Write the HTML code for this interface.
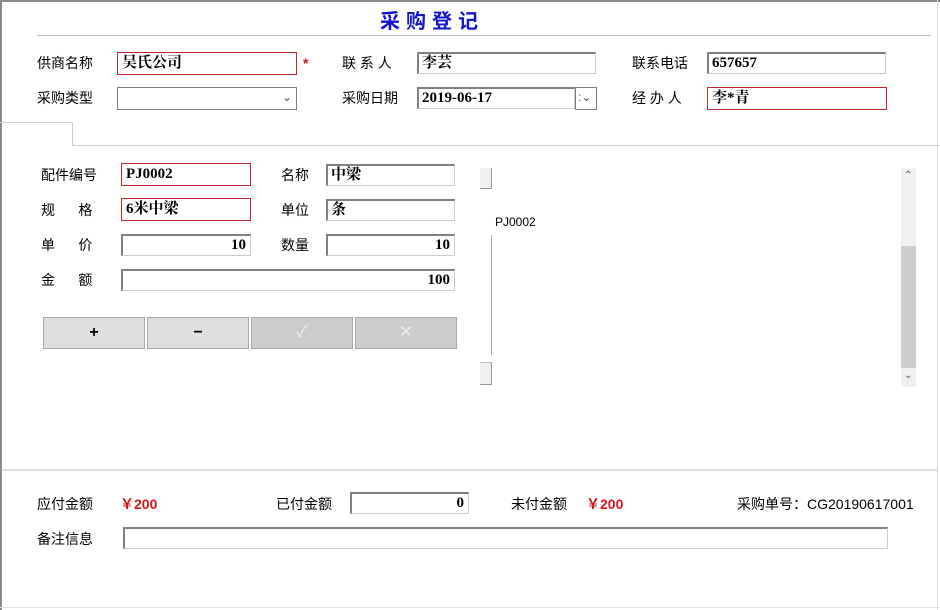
<!DOCTYPE html>
<html><head><meta charset="utf-8"><style>
*{margin:0;padding:0;box-sizing:border-box}
body{width:940px;height:610px;background:#fff;position:relative;overflow:hidden;font-family:"Liberation Sans","Noto Sans CJK SC",sans-serif;font-size:14px;color:#000}
.a{position:absolute}
.l{position:absolute;font-size:14px;line-height:16px;white-space:pre}
.in{position:absolute;height:22px;background:#fff;border:1px solid #ccc;border-top:2px solid #808080;border-left:2px solid #808080;font-family:"Liberation Serif","Noto Serif CJK SC",serif;font-weight:bold;font-size:15px;line-height:19px;padding-left:3px;white-space:nowrap;overflow:hidden}
.r{border:1px solid #c0282d;border-top:1px solid #c0282d;border-left:1px solid #c0282d;padding-left:4px;line-height:21px}
.ra{text-align:right;padding-right:4px}
.btn{position:absolute;top:317px;height:32px;width:102px;border:1px solid #a8a8a8;background:#dfdfdf;text-align:center;line-height:30px;font-weight:bold;font-size:16px}
.dis{background:#cccccc;color:#eee;font-weight:normal}
.red{color:#d8141c;font-weight:bold}
</style></head><body>
<div class="a" style="left:0;top:0;width:940px;height:2px;background:#8a8a8a"></div>
<div class="a" style="left:0;top:0;width:2px;height:610px;background:#8a8a8a"></div>
<div class="a" style="left:937px;top:0;width:1px;height:610px;background:#e0e0e0"></div>
<div class="a" style="left:0;top:607px;width:940px;height:1px;background:#e0e0e0"></div>
<div class="a" style="left:380px;top:7px;font-size:20px;font-weight:bold;color:#1515c8;letter-spacing:6px;font-family:'Noto Sans CJK SC',sans-serif;line-height:26px">采购登记</div>
<div class="a" style="left:37px;top:35px;width:894px;height:1px;background:#bbb"></div>

<div class="l" style="left:37px;top:55px">供商名称</div>
<div class="in r" style="left:117px;top:52px;width:180px;height:23px">吴氏公司</div>
<div class="a red" style="left:303px;top:55px;font-size:14px">*</div>
<div class="l" style="left:342px;top:55px">联 系 人</div>
<div class="in" style="left:417px;top:52px;width:179px">李芸</div>
<div class="l" style="left:632px;top:55px">联系电话</div>
<div class="in" style="left:707px;top:52px;width:179px">657657</div>

<div class="l" style="left:37px;top:90px">采购类型</div>
<div class="a" style="left:117px;top:87px;width:180px;height:23px;border:1px solid #7a7a7a"><span class="a" style="right:4px;top:2px;color:#555;font-size:12px">&#8964;</span></div>
<div class="l" style="left:342px;top:90px">采购日期</div>
<div class="in" style="left:417px;top:87px;width:158px">2019-06-17</div>
<div class="a" style="left:575px;top:87px;width:22px;height:23px;border:1px solid #7a7a7a;font-size:12px;color:#555;line-height:18px;padding-left:2px">:&#8964;</div>
<div class="l" style="left:632px;top:90px">经 办 人</div>
<div class="in r" style="left:707px;top:87px;width:180px;height:23px">李*青</div>

<div class="a" style="left:0;top:122px;width:72px;height:1px;background:#ccc"></div>
<div class="a" style="left:72px;top:122px;width:1px;height:24px;background:#ccc"></div>
<div class="a" style="left:72px;top:145px;width:868px;height:1px;background:#ccc"></div>

<div class="l" style="left:41px;top:167px">配件编号</div>
<div class="in r" style="left:121px;top:163px;width:130px;height:23px">PJ0002</div>
<div class="l" style="left:281px;top:167px">名称</div>
<div class="in" style="left:326px;top:164px;width:129px">中梁</div>
<div class="l" style="left:41px;top:202px">规      格</div>
<div class="in r" style="left:121px;top:198px;width:130px;height:23px">6米中梁</div>
<div class="l" style="left:281px;top:202px">单位</div>
<div class="in" style="left:326px;top:199px;width:129px">条</div>
<div class="l" style="left:41px;top:237px">单      价</div>
<div class="in ra" style="left:121px;top:234px;width:130px">10</div>
<div class="l" style="left:281px;top:237px">数量</div>
<div class="in ra" style="left:326px;top:234px;width:129px">10</div>
<div class="l" style="left:41px;top:272px">金      额</div>
<div class="in ra" style="left:121px;top:269px;width:334px">100</div>

<div class="btn" style="left:43px">+</div>
<div class="btn" style="left:147px">−</div>
<div class="btn dis" style="left:251px">✓</div>
<div class="btn dis" style="left:355px">✕</div>

<div class="a" style="left:480px;top:168px;width:12px;height:21px;background:#f0f0f0;border-right:1px solid #999;border-bottom:1px solid #999"></div>
<div class="a" style="left:480px;top:362px;width:12px;height:23px;background:#f0f0f0;border-right:1px solid #999;border-bottom:1px solid #999;border-top:1px solid #bbb"></div>
<div class="a" style="left:491px;top:235px;width:1px;height:120px;background:#aaa"></div>
<div class="a" style="left:495px;top:215px;font-size:12px;line-height:14px">PJ0002</div>
<div class="a" style="left:901px;top:168px;width:15px;height:219px;background:#f0f0f0"></div>
<div class="a" style="left:901px;top:246px;width:15px;height:122px;background:#cdcdcd"></div>
<div class="a" style="left:904px;top:170px;font-size:10px;color:#555">&#8963;</div>
<div class="a" style="left:904px;top:370px;font-size:10px;color:#555">&#8964;</div>

<div class="a" style="left:2px;top:469px;width:936px;height:2px;background:#ddd"></div>
<div class="l" style="left:37px;top:496px">应付金额</div>
<div class="l red" style="left:120px;top:496px;font-size:14px">￥200</div>
<div class="l" style="left:276px;top:496px">已付金额</div>
<div class="in ra" style="left:350px;top:492px;width:119px">0</div>
<div class="l" style="left:511px;top:496px">未付金额</div>
<div class="l red" style="left:586px;top:496px;font-size:14px">￥200</div>
<div class="l" style="left:737px;top:496px">采购单号：CG20190617001</div>
<div class="l" style="left:37px;top:531px">备注信息</div>
<div class="in" style="left:123px;top:527px;width:765px"></div>
</body></html>
